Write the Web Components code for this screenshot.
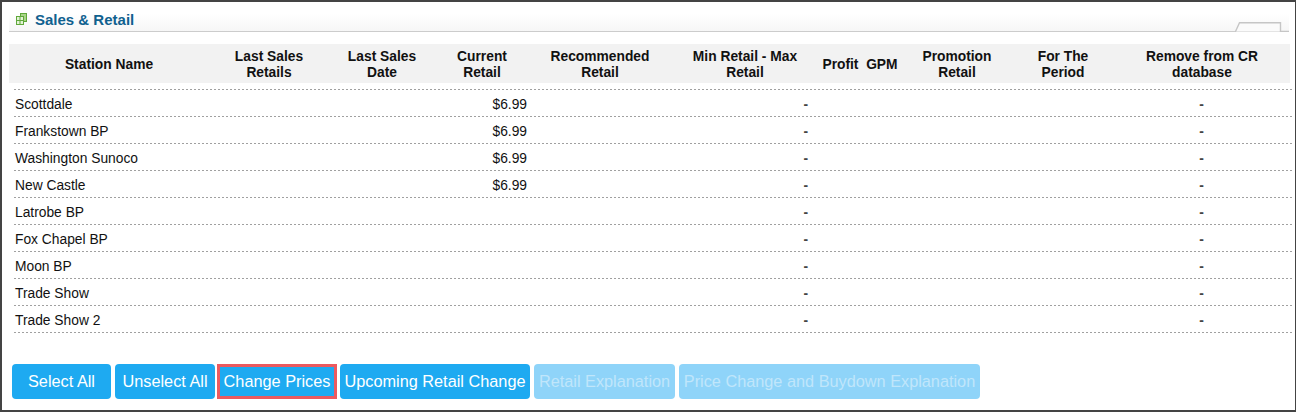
<!DOCTYPE html>
<html>
<head>
<meta charset="utf-8">
<title>Sales &amp; Retail</title>
<style>
html, body { margin: 0; padding: 0; background: #fff; }
body { font-family: "Liberation Sans", Arial, sans-serif; width: 1296px; height: 412px; overflow: hidden; }
</style>
</head>
<body>
<sales-panel heading="Sales &amp; Retail">
    <retail-table></retail-table>
    <div slot="actions">
        <action-button style="--w: 99px">Select All</action-button>
        <action-button style="--w: 100px">Unselect All</action-button>
        <action-button style="--w: 120px" focused>Change Prices</action-button>
        <action-button style="--w: 190px">Upcoming Retail Change</action-button>
        <action-button style="--w: 141px" disabled>Retail Explanation</action-button>
        <action-button style="--w: 301px" disabled>Price Change and Buydown Explanation</action-button>
    </div>
</sales-panel>
<script>
//Panel
class SalesPanel extends HTMLElement {
    connectedCallback() {
        const shadowRoot = this.attachShadow({ mode: 'open' });
        shadowRoot.innerHTML = `
            <style>
                :host {
                    display: flex;
                    flex-direction: column;
                    box-sizing: border-box;
                    width: 1296px;
                    height: 412px;
                    border: solid #444;
                    border-width: 2px 1px 2px 2px;
                    padding: 0 5px 0 7px;
                }
                .title {
                    display: flex;
                    align-items: center;
                    gap: 8px;
                    height: 30px;
                    padding: 5px 0 0 7px;
                    border-bottom: 1px solid #ccc;
                    background: linear-gradient(#fff 40%, #f6f6f6);
                    position: relative;
                    box-sizing: border-box;
                    width: 1280px;
                }
                h2 {
                    margin: 0;
                    font: bold 15px "Liberation Sans", Arial, sans-serif;
                    color: #10618f;
                }
                .tab {
                    position: absolute;
                    right: 0;
                    bottom: -1px;
                }
                .body { padding-top: 12px; flex: 1; }
                ::slotted([slot="actions"]) {
                    display: flex;
                    gap: 4px;
                    padding: 0 0 11px 3px;
                }
            </style>
            <div class="title">
                <svg width="11" height="12" viewBox="0 0 11 12">
                    <rect x="4.500" y="0.500" width="6" height="8" fill="#a9d488" stroke="#5fa83a"/>
                    <rect x="0.500" y="3.500" width="7" height="8" fill="#e4f2d6" stroke="#5fa83a"/>
                    <path d="M4 4v7M1 7.500h6" stroke="#5fa83a"/>
                </svg>
                <h2>${this.getAttribute('heading')}</h2>
                <svg class="tab" width="54" height="10" viewBox="0 0 54 10">
                    <path d="M0 9.500h.5L4.500 .8h41v8.700H54" fill="#fbfbfb" stroke="#c6c6c6" stroke-width="1.400"/>
                </svg>
            </div>
            <div class="body"><slot></slot></div>
            <slot name="actions"></slot>
        `;
    }
}
customElements.define("sales-panel", SalesPanel);

//Tabla
const COLUMNS = '200px 120px 106px 94px 142px 148px 82px 112px 98px 178px';
const HEADERS = ['Station Name', 'Last Sales Retails', 'Last Sales Date', 'Current Retail', 'Recommended Retail',
    'Min Retail - Max Retail', 'Profit&nbsp; GPM', 'Promotion Retail', 'For The Period', 'Remove from CR database'];
const STATIONS = [
    ['Scottdale', '$6.99'], ['Frankstown BP', '$6.99'], ['Washington Sunoco', '$6.99'], ['New Castle', '$6.99'],
    ['Latrobe BP', ''], ['Fox Chapel BP', ''], ['Moon BP', ''], ['Trade Show', ''], ['Trade Show 2', '']
];

class RetailTable extends HTMLElement {
    connectedCallback() {
        const shadowRoot = this.attachShadow({ mode: 'open' });
        const rows = STATIONS.map(s => `
            <div class="row">
                <span>${s[0]}</span>
                <span class="price">${s[1]}</span>
                <span class="dash">-</span>
                <span class="dash last">-</span>
            </div>`).join('');
        shadowRoot.innerHTML = `
            <style>
                :host { display: block; font-size: 13.8px; color: #111; }
                .head {
                    display: grid;
                    grid-template-columns: ${COLUMNS};
                    align-items: center;
                    box-sizing: border-box;
                    height: 39px;
                    padding-top: 2px;
                    background: #f2f2f2;
                    font-weight: bold;
                    line-height: 16px;
                    text-align: center;
                }
                .head div { padding: 0 3px; }
                .head div:nth-child(9) { padding-left: 5px; padding-right: 3px; }
                .head div:last-child { padding-left: 8px; padding-right: 4px; }
                .rows {
                    margin: 6px -2px 0 5px;
                    padding-top: 1px;
                    background: repeating-linear-gradient(90deg, #a0a0a0 0 2px, transparent 2px 4px) top / 100% 1px no-repeat;
                }
                .row {
                    display: grid;
                    grid-template-columns: 195px 120px 106px 94px 142px 148px 82px 112px 98px 180px;
                    align-items: center;
                    box-sizing: border-box;
                    height: 27px;
                    padding: 2px 0 0 1px;
                    background: repeating-linear-gradient(90deg, #a0a0a0 0 2px, transparent 2px 4px) bottom / 100% 1px no-repeat;
                }
                .price { grid-column: 4; text-align: right; padding-right: 3px; }
                .dash { grid-column: 6; text-align: right; padding-right: 12px; font-weight: bold; color: #444; }
                .dash.last { grid-column: 10; text-align: center; padding-right: 1px; }
            </style>
            <div class="head">${HEADERS.map(h => `<div>${h}</div>`).join('')}</div>
            <div class="rows">${rows}</div>
        `;
    }
}
customElements.define("retail-table", RetailTable);

//Boton
class ActionButton extends HTMLElement {
    connectedCallback() {
        const shadowRoot = this.attachShadow({ mode: 'open' });
        shadowRoot.innerHTML = `
            <style>
                :host { display: block; }
                :host([focused]) { margin: 0 -1px 0 -2px; }
                button {
                    display: block;
                    box-sizing: border-box;
                    width: var(--w, auto);
                    height: 35px;
                    padding: 0;
                    border: none;
                    border-radius: 4px;
                    background: #1eaaf1;
                    color: #fff;
                    font: 16.3px "Liberation Sans", Arial, sans-serif;
                    white-space: nowrap;
                }
                :host([focused]) button {
                    border-radius: 0;
                    outline: 3px solid #ec5a5f;
                    outline-offset: -3px;
                }
                :host([disabled]) button {
                    background: #8fd4f9;
                    color: #c0e6fb;
                }
            </style>
            <button><slot></slot></button>
        `;
    }
}
customElements.define("action-button", ActionButton);
</script>
</body>
</html>
